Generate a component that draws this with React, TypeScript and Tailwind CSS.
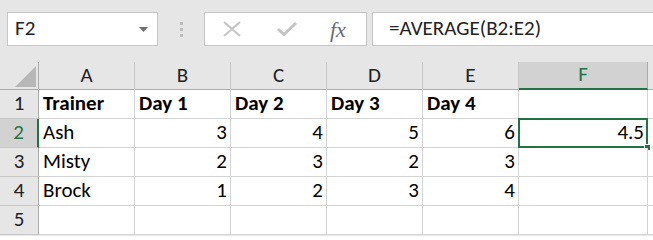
import React from "react";

const FONT = "font-['Calibri','Carlito','Lato',sans-serif]";

const columns = [
  { key: "A", width: "w-[96px]" },
  { key: "B", width: "w-[96px]" },
  { key: "C", width: "w-[96px]" },
  { key: "D", width: "w-[96px]" },
  { key: "E", width: "w-[96px]" },
  { key: "F", width: "w-[129px]" },
];

type Cell = { value: string; bold?: boolean; num?: boolean };

const rows: Cell[][] = [
  [
    { value: "Trainer", bold: true },
    { value: "Day 1", bold: true },
    { value: "Day 2", bold: true },
    { value: "Day 3", bold: true },
    { value: "Day 4", bold: true },
    { value: "" },
  ],
  [
    { value: "Ash" },
    { value: "3", num: true },
    { value: "4", num: true },
    { value: "5", num: true },
    { value: "6", num: true },
    { value: "4.5", num: true },
  ],
  [
    { value: "Misty" },
    { value: "2", num: true },
    { value: "3", num: true },
    { value: "2", num: true },
    { value: "3", num: true },
    { value: "" },
  ],
  [
    { value: "Brock" },
    { value: "1", num: true },
    { value: "2", num: true },
    { value: "3", num: true },
    { value: "4", num: true },
    { value: "" },
  ],
  [
    { value: "" },
    { value: "" },
    { value: "" },
    { value: "" },
    { value: "" },
    { value: "" },
  ],
];

function FormulaBar() {
  return (
    <div className="flex h-[62px] items-start pt-[12px]">
      {/* name box */}
      <div className="ml-[7px] flex h-[34px] w-[151px] items-center justify-between border border-[#c6c6c6] bg-white pl-[7px] pr-[9px]">
        <span className="text-[21px] text-[#222]">F2</span>
        <svg width="9" height="5" viewBox="0 0 9 5">
          <path d="M0 0 L9 0 L4.5 5 Z" fill="#6e6e6e" />
        </svg>
      </div>
      <div className="flex h-[34px] w-[46px] flex-col items-center justify-center gap-[3px]">
        <div className="h-[3px] w-[3px] bg-[#bcbcbc]" />
        <div className="h-[3px] w-[3px] bg-[#bcbcbc]" />
        <div className="h-[3px] w-[3px] bg-[#bcbcbc]" />
      </div>
      {/* cancel / enter / function */}
      <div className="flex h-[34px] w-[163px] items-center border border-[#c6c6c6] bg-white">
        <svg className="ml-[18px]" width="18" height="16" viewBox="0 0 18 16">
          <path d="M1 1 L17 15 M17 1 L1 15" stroke="#c4c4c4" strokeWidth="2" fill="none" />
        </svg>
        <svg className="ml-[36px]" width="20" height="14" viewBox="0 0 20 14">
          <path d="M1 7 L7 12.5 L19 1" stroke="#c4c4c4" strokeWidth="3" fill="none" />
        </svg>
        <span className="ml-[33px] font-['Liberation_Serif',serif] text-[22px] italic text-[#6b6b6b]">
          fx
        </span>
      </div>
      <div className="ml-[5px] flex h-[34px] flex-1 items-center border border-r-0 border-[#c6c6c6] bg-white pl-[16px]">
        <span className="text-[21px] text-[#222]">=AVERAGE(B2:E2)</span>
      </div>
    </div>
  );
}

function HeaderRow() {
  return (
    <div className="flex h-[28px]">
      <div className="relative w-[39px] shrink-0 border-r border-b border-[#ababab]">
        <svg className="absolute left-[15px] top-[4px]" width="21" height="21" viewBox="0 0 21 21">
          <path d="M21 0 L21 21 L0 21 Z" fill="#b7b7b7" />
        </svg>
      </div>
      {columns.map((c) =>
        c.key === "F" ? (
          <div
            key={c.key}
            className={`${c.width} flex shrink-0 items-center justify-center border-r border-r-[#ababab] border-b-2 border-b-[#217346] bg-[#d2d2d2] text-[21px] text-[#217346]`}
          >
            {c.key}
          </div>
        ) : (
          <div
            key={c.key}
            className={`${c.width} flex shrink-0 items-center justify-center border-r border-b border-r-[#c8c8c8] border-b-[#ababab] text-[21px] text-[#222]`}
          >
            {c.key}
          </div>
        )
      )}
      <div className="flex-1 border-b border-[#ababab]" />
    </div>
  );
}

export default function App() {
  return (
    <div className={`h-[236px] w-[653px] overflow-hidden bg-[#e6e6e6] ${FONT}`}>
      <FormulaBar />
      <HeaderRow />
      {rows.map((row, ri) => {
        const selectedRow = ri === 1;
        return (
          <div key={ri} className="flex h-[29px]">
            <div
              className={
                selectedRow
                  ? "flex w-[39px] shrink-0 items-center justify-center border-r-2 border-b border-r-[#217346] border-b-[#c8c8c8] bg-[#d2d2d2] text-[21px] text-[#217346]"
                  : "flex w-[39px] shrink-0 items-center justify-center border-r border-b border-r-[#ababab] border-b-[#c8c8c8] text-[21px] text-[#222]"
              }
            >
              {ri + 1}
            </div>
            {row.map((cell, ci) => {
              const col = columns[ci];
              const active = selectedRow && col.key === "F";
              return (
                <div
                  key={ci}
                  className={`${col.width} relative flex shrink-0 items-end border-r border-b border-[#d4d4d4] bg-white pb-[2px] text-[21px] leading-[25px] text-black ${
                    cell.num ? "justify-end pr-[3px]" : "justify-start pl-[4px]"
                  } ${cell.bold ? "font-bold" : ""}`}
                >
                  {cell.value}
                  {active && (
                    <>
                      <div className="pointer-events-none absolute -top-[1px] -left-[1px] -right-[1px] -bottom-[1px] border-2 border-[#217346]" />
                      <div className="absolute -right-[4px] -bottom-[4px] h-[7px] w-[7px] border border-white bg-[#217346]" />
                    </>
                  )}
                </div>
              );
            })}
            <div className="flex-1 border-b border-[#d4d4d4] bg-white" />
          </div>
        );
      })}
    </div>
  );
}
